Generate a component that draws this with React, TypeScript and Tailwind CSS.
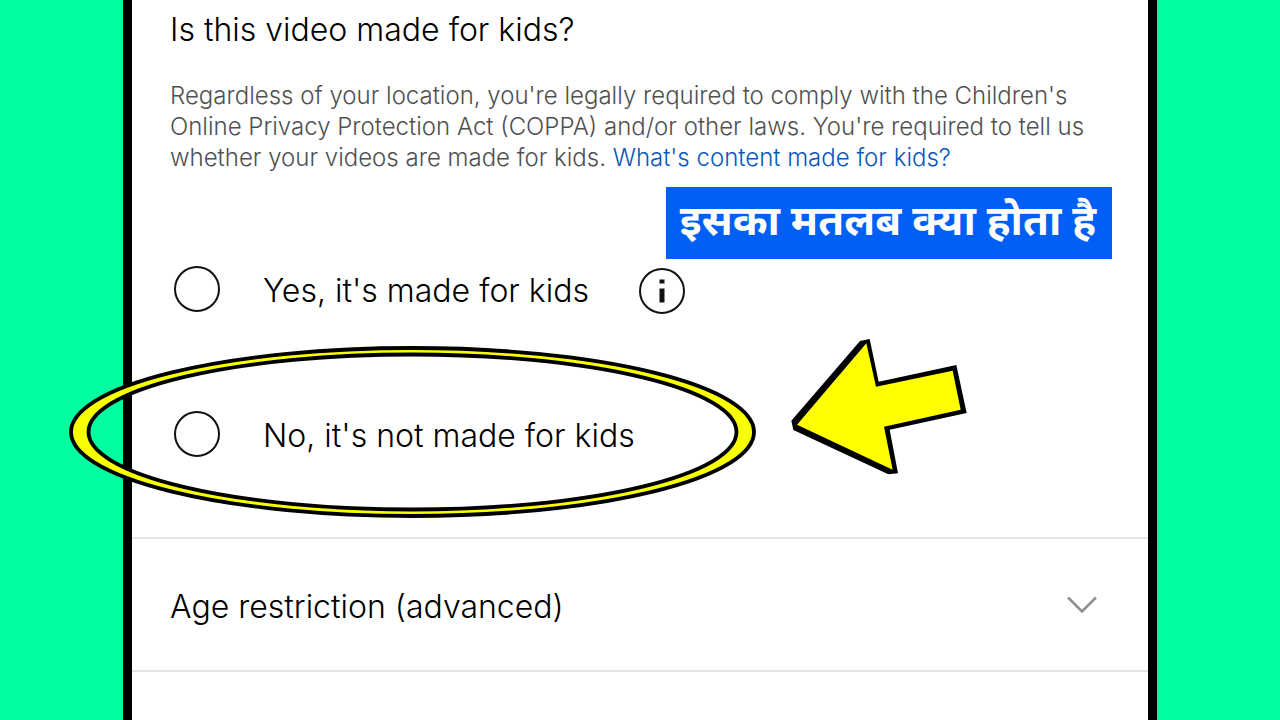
import { useState } from 'react';

const options = [
  { value: 'yes', label: "Yes, it's made for kids" },
  { value: 'no', label: "No, it's not made for kids" },
];

function HighlightRing() {
  return (
    <svg
      aria-hidden="true"
      viewBox="0 0 687 172"
      className="pointer-events-none absolute -top-[65px] -left-[101px] h-[172px] w-[687px]"
      fill="none"
    >
      <path
        fillRule="evenodd"
        fill="#f8ff00"
        stroke="#000"
        strokeWidth="3.8"
        d="M2 86a341.5 84 0 1 0 683 0a341.5 84 0 1 0 -683 0Z M19.5 86a324 77.5 0 1 0 648 0a324 77.5 0 1 0 -648 0Z"
      />
    </svg>
  );
}

function Arrow() {
  return (
    <svg
      aria-hidden="true"
      viewBox="0 0 600 450"
      className="pointer-events-none absolute -top-[81px] left-[610px] h-[150px] w-[200px]"
    >
      <polygon fill="#000" points="240,33 269,27 296,155 529,105 560,249 329,299 354,430 325,433 40,300 34,272" />
      <polygon fill="#ffff00" points="259,40 288,170 518,122 542,239 312,290 338,419 51,284" />
    </svg>
  );
}

export default function App() {
  const [selected, setSelected] = useState('');
  const [open, setOpen] = useState(false);

  return (
    <div className="min-h-screen bg-[#00ff9f] px-[123px] flex font-['Inter','Noto_Sans',sans-serif] font-light text-black">
      <main className="flex-1 min-w-0 bg-white border-x-[9px] border-black">
        <section className="pl-[38px] pr-9 pt-[10px]">
          <h1 id="audience-title" className="text-[32px] leading-10">Is this video made for kids?</h1>
          <p className="mt-[30px] text-2xl leading-[31px] text-[#505050]">
            Regardless of your location, you're legally required to comply with the Children's
            Online Privacy Protection Act (COPPA) and/or other laws. You're required to tell us
            whether your videos are made for kids.{' '}
            <a href="#made-for-kids" className="text-[#0a56bd]">What's content made for kids?</a>
          </p>

          <div className="mt-[14px] flex justify-end">
            <strong
              lang="hi"
              className="bg-[#005ff5] pl-[14px] pr-4 h-[72px] leading-[75px] font-['Noto_Sans_Devanagari','Noto_Sans',sans-serif] text-[42px] font-bold text-white whitespace-nowrap"
            >
              इसका मतलब क्या होता है
            </strong>
          </div>

          <div role="radiogroup" aria-labelledby="audience-title" className="mt-[7px]">
            {options.map((option, i) => (
              <div key={option.value} className={`relative flex items-center h-[46px] ${i > 0 ? 'mt-[99px]' : ''}`}>
                {option.value === 'no' && <HighlightRing />}
                {option.value === 'no' && <Arrow />}
                <label className="relative flex items-center gap-[43px] pl-1 text-[32px] leading-10 whitespace-nowrap cursor-pointer">
                  <input
                    type="radio"
                    name="audience"
                    value={option.value}
                    checked={selected === option.value}
                    onChange={() => setSelected(option.value)}
                    className="size-[46px] shrink-0 appearance-none rounded-full border-2 border-[#111] checked:border-[12px]"
                  />
                  <span className="pt-1">{option.label}</span>
                </label>
                {option.value === 'yes' && (
                  <button type="button" aria-label="More information" className="ml-[50px] pt-1">
                    <svg viewBox="0 0 46 46" className="size-[46px]" fill="none">
                      <circle cx="23" cy="23" r="22" stroke="#111" strokeWidth="2" />
                      <path d="M20.5 11.5h5v4h-5zM20.5 20.5h5v14h-5z" fill="#111" />
                    </svg>
                  </button>
                )}
              </div>
            ))}
          </div>
        </section>

        <section className="mt-20 border-y-2 border-[#e5e5e5]">
          <button
            type="button"
            aria-expanded={open}
            onClick={() => setOpen(!open)}
            className="flex w-full items-center justify-between h-[131px] pl-[38px] pr-[50px] text-left text-[32px] leading-10"
          >
            <span className="pt-1">Age restriction (advanced)</span>
            <svg viewBox="0 0 32 20" className="w-8 h-5" fill="none" stroke="#909090" strokeWidth="2.5">
              <path d="M2 2.5l14 14l14-14" />
            </svg>
          </button>
        </section>
      </main>
    </div>
  );
}
